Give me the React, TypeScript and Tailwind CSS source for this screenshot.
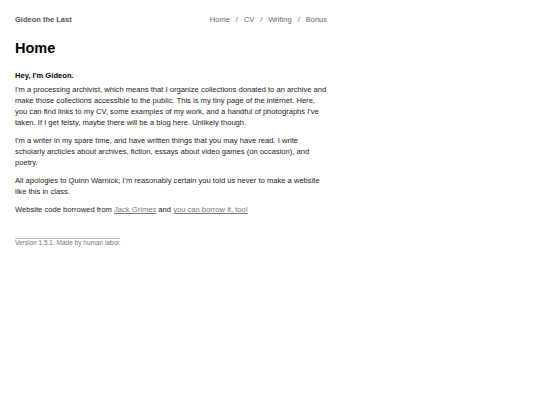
export default function App() {
  const nav = ['Home', 'CV', 'Writing', 'Bonus'];
  return (
    <div className="min-h-[405px] bg-white font-['Liberation_Sans',Arial,sans-serif] text-[#222]">
      <div className="w-[312px] ml-[15px] pt-[15px]">
        <header className="flex items-center justify-between text-[7.5px] leading-[10px]">
          <span className="font-bold text-[#555]">Gideon the Last</span>
          <nav className="flex gap-[6px] text-[#666]">
            {nav.map((n, i) => (
              <span key={n} className="flex gap-[6px]">
                {i > 0 && <span>/</span>}
                <span>{n}</span>
              </span>
            ))}
          </nav>
        </header>

        <h1 className="mt-[13px] text-[14.5px] leading-[20px] font-bold text-black">Home</h1>

        <main className="mt-[12px] text-[7.6px] leading-[11px]">
          <p className="font-bold text-black mb-[3px]">Hey, I'm Gideon.</p>
          <div className="space-y-[7px]">
            <p>
              I'm a processing archivist, which means that I organize collections donated to an archive and
              make those collections accessible to the public. This is my tiny page of the internet. Here,
              you can find links to my CV, some examples of my work, and a handful of photographs I've
              taken. If I get feisty, maybe there will be a blog here. Unlikely though.
            </p>
            <p>
              I'm a writer in my spare time, and have written things that you may have read. I write
              scholarly arcticles about archives, fiction, essays about video games (on occasion), and
              poetry.
            </p>
            <p>
              All apologies to Quinn Warnick; I'm reasonably certain you told us never to make a website
              like this in class.
            </p>
            <p>
              Website code borrowed from <a className="underline text-[#777]">Jack Grimes</a> and{' '}
              <a className="underline text-[#777]">you can borrow it, too!</a>
            </p>
          </div>
        </main>

        <footer className="mt-[23px] w-[105px] border-t border-[#bbb] text-[6.5px] leading-[8px] text-[#777] whitespace-nowrap">
          Version 1.5.1. Made by human labor.
        </footer>
      </div>
    </div>
  );
}
